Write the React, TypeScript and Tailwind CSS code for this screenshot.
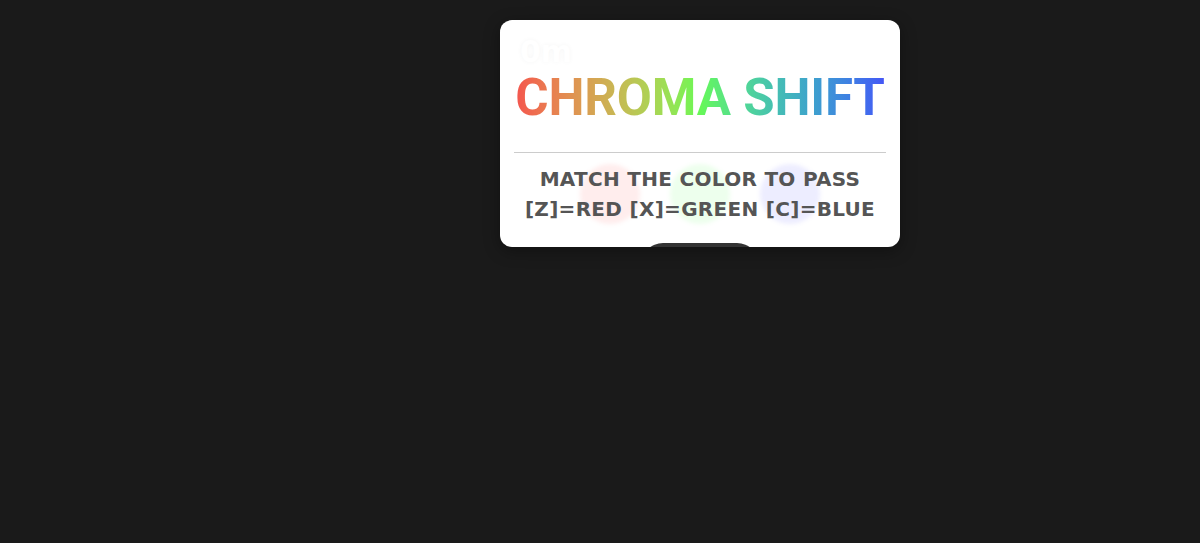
import React from 'react'

const SWATCHES = ['bg-[#ff5050]/10', 'bg-[#50ff50]/10', 'bg-[#5050ff]/10']

const TitleCard = () => {
  return (
    <div className="relative w-[400px] h-[227px] shrink-0 overflow-hidden rounded-xl bg-white px-[14px] shadow-[0_4px_16px_rgba(0,0,0,0.35)]">
      {/* distance counter */}
      <div className="absolute left-[20px] top-[17px] font-['DejaVu_Sans',sans-serif] text-[30px] font-bold leading-none text-white [text-shadow:0_0_5px_rgba(0,0,0,0.04)]">
        0m
      </div>

      <div className="-mx-[14px] flex justify-center pt-[48px]">
        <h1 className="whitespace-nowrap bg-gradient-to-r from-[#f4544e] via-[#66f855] to-[#4555f6] bg-clip-text font-['Roboto',sans-serif] text-[51px] font-bold leading-[1.172] tracking-[-0.2px] text-transparent">
          CHROMA SHIFT
        </h1>
      </div>

      <div className="mt-[24px] h-px bg-[#cccccc]" />

      <div className="relative mt-[11px]">
        <div className="absolute inset-0 flex items-center justify-center gap-[30px]">
          {SWATCHES.map((c) => (
            <div key={c} className={`h-[60px] w-[60px] rounded-full blur-[2px] ${c}`} />
          ))}
        </div>
        <p className="relative whitespace-nowrap text-center font-['DejaVu_Sans',sans-serif] text-[20px] font-bold leading-[30px] tracking-[0.3px] text-[#555555]">
          MATCH THE COLOR TO PASS
          <br />
          [Z]=RED [X]=GREEN [C]=BLUE
        </p>
      </div>

      <div className="mt-[19px] flex justify-center">
        <button className="h-[44px] w-[118px] rounded-[22px] bg-[#333333]" />
      </div>
    </div>
  )
}

export default function App() {
  return (
    <div className="flex h-screen bg-[#1a1a1a] pl-[500px] pt-5">
      <TitleCard />
    </div>
  )
}
